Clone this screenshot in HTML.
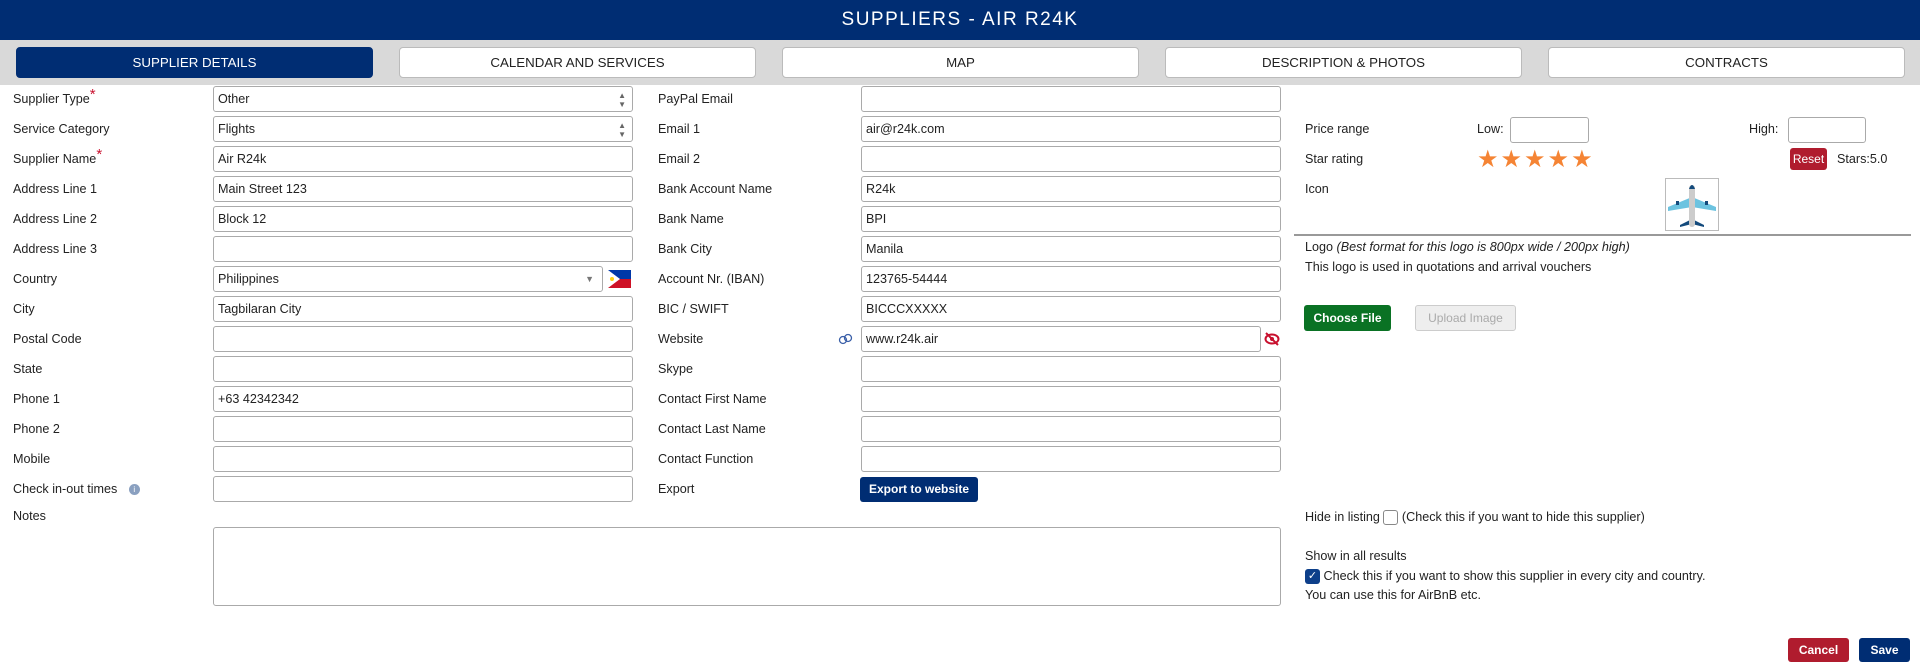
<!DOCTYPE html>
<html><head><meta charset="utf-8"><style>
*{box-sizing:border-box}
body{margin:0;width:1920px;height:672px;position:relative;background:#fff;font-family:"Liberation Sans",sans-serif;font-size:12.6px;color:#222;overflow:hidden}
.hdr{position:absolute;left:0;top:0;width:1920px;height:40px;background:#002d73;color:#fff;text-align:center;font-size:19px;line-height:40px;letter-spacing:1.5px}
.bar{position:absolute;left:0;top:40px;width:1920px;height:45px;background:#d9d9d9}
.tab{position:absolute;top:47px;height:31px;width:357px;background:#fff;border:1px solid #bbb;border-radius:4px;text-align:center;line-height:29px;font-size:13.3px;color:#222}
.tab.on{background:#002d73;color:#fff;border-color:#002d73}
.l{position:absolute;line-height:16px}
.in{position:absolute;height:26px;border:1px solid #aaa;border-radius:3px;background:#fff;padding-left:4px;line-height:24px;font-size:12.6px}
.req{color:#c8102e;font-size:15px;position:relative;top:-4px}
.btn{position:absolute;border-radius:3px;text-align:center;font-size:12px;font-weight:bold;color:#fff}
</style></head><body>
<div class="hdr">SUPPLIERS - AIR R24K</div>
<div class="bar"></div>
<div class="tab on" style="left:16px">SUPPLIER DETAILS</div>
<div class="tab" style="left:399px">CALENDAR AND SERVICES</div>
<div class="tab" style="left:782px">MAP</div>
<div class="tab" style="left:1165px">DESCRIPTION &amp; PHOTOS</div>
<div class="tab" style="left:1548px">CONTRACTS</div>

<div class="l" style="left:13px;top:91px">Supplier Type<span class="req">*</span></div>
<div class="l" style="left:13px;top:121px">Service Category</div>
<div class="l" style="left:13px;top:151px">Supplier Name<span class="req">*</span></div>
<div class="l" style="left:13px;top:181px">Address Line 1</div>
<div class="l" style="left:13px;top:211px">Address Line 2</div>
<div class="l" style="left:13px;top:241px">Address Line 3</div>
<div class="l" style="left:13px;top:271px">Country</div>
<div class="l" style="left:13px;top:301px">City</div>
<div class="l" style="left:13px;top:331px">Postal Code</div>
<div class="l" style="left:13px;top:361px">State</div>
<div class="l" style="left:13px;top:391px">Phone 1</div>
<div class="l" style="left:13px;top:421px">Phone 2</div>
<div class="l" style="left:13px;top:451px">Mobile</div>
<div class="l" style="left:13px;top:481px">Check in-out times <span style="display:inline-block;width:11px;height:11px;border-radius:50%;background:#8aa0c0;color:#fff;font-size:8px;text-align:center;line-height:11px;margin-left:8px;vertical-align:middle">i</span></div>
<div class="l" style="left:13px;top:508px">Notes</div>

<div class="in" style="left:213px;top:86px;width:420px">Other<span style="position:absolute;right:6px;top:0;font-size:8px;color:#666;line-height:9px;padding-top:4px">▲<br>▼</span></div>
<div class="in" style="left:213px;top:116px;width:420px">Flights<span style="position:absolute;right:6px;top:0;font-size:8px;color:#666;line-height:9px;padding-top:4px">▲<br>▼</span></div>
<div class="in" style="left:213px;top:146px;width:420px">Air R24k</div>
<div class="in" style="left:213px;top:176px;width:420px">Main Street 123</div>
<div class="in" style="left:213px;top:206px;width:420px">Block 12</div>
<div class="in" style="left:213px;top:236px;width:420px"></div>
<div class="in" style="left:213px;top:266px;width:390px">Philippines<span style="position:absolute;right:8px;top:0;font-size:9px;color:#777">▼</span></div>
<svg style="position:absolute;left:608px;top:270px" width="23" height="18" viewBox="0 0 23 18"><rect width="23" height="9" fill="#0038a8"/><rect y="9" width="23" height="9" fill="#ce1126"/><polygon points="0,0 12,9 0,18" fill="#fff"/><circle cx="4" cy="9" r="2" fill="#fcd116"/></svg>
<div class="in" style="left:213px;top:296px;width:420px">Tagbilaran City</div>
<div class="in" style="left:213px;top:326px;width:420px"></div>
<div class="in" style="left:213px;top:356px;width:420px"></div>
<div class="in" style="left:213px;top:386px;width:420px">+63 42342342</div>
<div class="in" style="left:213px;top:416px;width:420px"></div>
<div class="in" style="left:213px;top:446px;width:420px"></div>
<div class="in" style="left:213px;top:476px;width:420px"></div>
<div class="in" style="left:213px;top:527px;width:1068px;height:79px"></div>

<div class="l" style="left:658px;top:91px">PayPal Email</div>
<div class="l" style="left:658px;top:121px">Email 1</div>
<div class="l" style="left:658px;top:151px">Email 2</div>
<div class="l" style="left:658px;top:181px">Bank Account Name</div>
<div class="l" style="left:658px;top:211px">Bank Name</div>
<div class="l" style="left:658px;top:241px">Bank City</div>
<div class="l" style="left:658px;top:271px">Account Nr. (IBAN)</div>
<div class="l" style="left:658px;top:301px">BIC / SWIFT</div>
<div class="l" style="left:658px;top:331px">Website</div>
<div class="l" style="left:658px;top:361px">Skype</div>
<div class="l" style="left:658px;top:391px">Contact First Name</div>
<div class="l" style="left:658px;top:421px">Contact Last Name</div>
<div class="l" style="left:658px;top:451px">Contact Function</div>
<div class="l" style="left:658px;top:481px">Export</div>

<div class="in" style="left:861px;top:86px;width:420px"></div>
<div class="in" style="left:861px;top:116px;width:420px">air@r24k.com</div>
<div class="in" style="left:861px;top:146px;width:420px"></div>
<div class="in" style="left:861px;top:176px;width:420px">R24k</div>
<div class="in" style="left:861px;top:206px;width:420px">BPI</div>
<div class="in" style="left:861px;top:236px;width:420px">Manila</div>
<div class="in" style="left:861px;top:266px;width:420px">123765-54444</div>
<div class="in" style="left:861px;top:296px;width:420px">BICCCXXXXX</div>
<svg style="position:absolute;left:838px;top:333px" width="15" height="12" viewBox="0 0 15 12"><circle cx="5" cy="7" r="3.5" fill="none" stroke="#3a5fa8" stroke-width="1.3"/><circle cx="10" cy="5" r="3.5" fill="none" stroke="#3a5fa8" stroke-width="1.3"/></svg>
<div class="in" style="left:861px;top:326px;width:400px">www.r24k.air</div>
<svg style="position:absolute;left:1264px;top:332px" width="16" height="14" viewBox="0 0 16 14"><ellipse cx="8" cy="7" rx="6.5" ry="4.5" fill="none" stroke="#c8102e" stroke-width="2"/><circle cx="8" cy="7" r="2" fill="#c8102e"/><line x1="2" y1="1" x2="14" y2="13" stroke="#c8102e" stroke-width="2"/></svg>
<div class="in" style="left:861px;top:356px;width:420px"></div>
<div class="in" style="left:861px;top:386px;width:420px"></div>
<div class="in" style="left:861px;top:416px;width:420px"></div>
<div class="in" style="left:861px;top:446px;width:420px"></div>
<div class="btn" style="left:860px;top:477px;width:118px;height:25px;line-height:25px;background:#002d73">Export to website</div>

<div class="l" style="left:1305px;top:121px">Price range</div>
<div class="l" style="left:1477px;top:121px">Low:</div>
<div class="in" style="left:1510px;top:117px;width:79px"></div>
<div class="l" style="left:1749px;top:121px">High:</div>
<div class="in" style="left:1788px;top:117px;width:78px"></div>
<div class="l" style="left:1305px;top:151px">Star rating</div>
<div class="l" style="left:1477px;top:148px;font-size:24px;line-height:24px;color:#f58434;letter-spacing:2px">★★★★★</div>
<div class="btn" style="left:1790px;top:148px;width:37px;height:22px;line-height:22px;background:#b01c2e;font-weight:normal">Reset</div>
<div class="l" style="left:1837px;top:151px">Stars:5.0</div>
<div class="l" style="left:1305px;top:181px">Icon</div>
<div style="position:absolute;left:1665px;top:178px;width:54px;height:53px;border:1px solid #bbb"></div>
<svg style="position:absolute;left:1666px;top:179px" width="52" height="51" viewBox="0 0 52 51"><polygon points="26,18 2,28 2,32 26,28 50,32 50,28" fill="#6cc3e0"/><polygon points="26,40 14,46 14,48 26,45 38,48 38,46" fill="#134a7c"/><rect x="23" y="6" width="6" height="42" rx="3" fill="#ccc"/><path d="M23 10 Q26 2 29 10 Z" fill="#134a7c"/><rect x="10" y="22" width="3" height="4" fill="#134a7c"/><rect x="39" y="22" width="3" height="4" fill="#134a7c"/></svg>
<div style="position:absolute;left:1294px;top:234px;width:617px;height:2px;background:#999"></div>
<div class="l" style="left:1305px;top:239px">Logo <i>(Best format for this logo is 800px wide / 200px high)</i></div>
<div class="l" style="left:1305px;top:259px">This logo is used in quotations and arrival vouchers</div>
<div class="btn" style="left:1304px;top:305px;width:87px;height:26px;line-height:26px;background:#0a7224">Choose File</div>
<div class="btn" style="left:1415px;top:305px;width:101px;height:26px;line-height:24px;background:#eee;border:1px solid #ccc;color:#aaa;font-weight:normal">Upload Image</div>

<div class="l" style="left:1305px;top:509px">Hide in listing <span style="display:inline-block;width:15px;height:15px;border:1px solid #888;border-radius:3px;vertical-align:middle"></span> (Check this if you want to hide this supplier)</div>
<div class="l" style="left:1305px;top:548px">Show in all results</div>
<div class="l" style="left:1305px;top:568px"><span style="display:inline-block;width:15px;height:15px;background:#0d3f8a;border-radius:3px;color:#fff;font-size:11px;text-align:center;line-height:15px;vertical-align:middle">✓</span> Check this if you want to show this supplier in every city and country.</div>
<div class="l" style="left:1305px;top:587px">You can use this for AirBnB etc.</div>

<div class="btn" style="left:1788px;top:638px;width:61px;height:24px;line-height:24px;background:#b01c2e">Cancel</div>
<div class="btn" style="left:1859px;top:638px;width:51px;height:24px;line-height:24px;background:#002d73">Save</div>
</body></html>
